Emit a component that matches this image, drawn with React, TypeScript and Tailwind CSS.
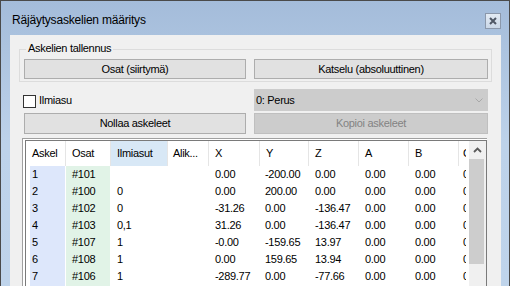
import React from "react";

const cols = [40, 45, 57, 41, 51, 49, 50, 50, 50];
const headers = ["Askel", "Osat", "Ilmiasut", "Alik...", "X", "Y", "Z", "A", "B"];
const rows: string[][] = [
  ["1", "#101", "", "", "0.00", "-200.00", "0.00", "0.00", "0.00"],
  ["2", "#100", "0", "", "0.00", "200.00", "0.00", "0.00", "0.00"],
  ["3", "#102", "0", "", "-31.26", "0.00", "-136.47", "0.00", "0.00"],
  ["4", "#103", "0,1", "", "31.26", "0.00", "-136.47", "0.00", "0.00"],
  ["5", "#107", "1", "", "-0.00", "-159.65", "13.97", "0.00", "0.00"],
  ["6", "#108", "1", "", "0.00", "159.65", "13.94", "0.00", "0.00"],
  ["7", "#106", "1", "", "-289.77", "0.00", "-77.66", "0.00", "0.00"],
  ["8", "#105", "1", "", "289.77", "0.00", "-77.66", "0.00", "0.00"],
];

function Btn({ w, h, label, disabled }: { w: string; h: string; label: string; disabled?: boolean }) {
  return (
    <div
      className={`${w} ${h} shrink-0 flex items-center justify-center border ${
        disabled ? "bg-[#cccccc] border-[#bfbfbf] text-[#838383]" : "bg-[#e1e1e1] border-[#adadad] text-black"
      }`}
    >
      {label}
    </div>
  );
}

export default function App() {
  return (
    <div
      className="w-[510px] h-[286px] overflow-hidden bg-white text-[11px] tracking-[-0.3px] leading-[13px] text-black"
      style={{ fontFamily: '"Liberation Sans", Arial, sans-serif' }}
    >
      <div className="h-[286px] border-l border-t border-r border-[#4a4a4a] bg-gradient-to-b from-[#a4bcda] via-[#bdd2ea] to-[#bfd4eb] flex flex-col">
        {/* Title bar */}
        <div className="h-[34px] shrink-0 flex items-center justify-between pl-[11px] pr-[8px]">
          <div className="text-[12px] tracking-[-0.2px] mt-[4px]">Räjäytysaskelien määritys</div>
          <div className="w-[16px] h-[16px] mt-[6px] border border-[#8b98ab] bg-gradient-to-b from-[#e3ebf4] to-[#cbd8e8] flex items-center justify-center">
            <svg width="10" height="10" viewBox="0 0 10 10">
              <path d="M2 2 L8 8 M8 2 L2 8" stroke="#4f5866" strokeWidth="2" />
            </svg>
          </div>
        </div>

        {/* Content */}
        <div className="flex-1 ml-[9px] mr-[8px] bg-[#f0f0f0] flex flex-col min-h-0">
          {/* Group box */}
          <div className="relative mt-[14px] ml-[9px] w-[473px] border border-[#dcdcdc] pt-[9px] pl-[4px] pr-[3px] pb-[2px]">
            <span className="absolute left-[6px] top-[-8px] px-[2px] bg-[#f0f0f0]">Askelien tallennus</span>
            <div className="flex gap-[8px]">
              <Btn w="w-[222px]" h="h-[20px]" label="Osat (siirtymä)" />
              <Btn w="w-[234px]" h="h-[20px]" label="Katselu (absoluuttinen)" />
            </div>
          </div>

          {/* Row 2 */}
          <div className="mt-[7px] pl-[13px] flex">
            <div className="w-[231px] flex items-start pt-[6px]">
              <div className="w-[13px] h-[13px] border border-[#333333] bg-white" />
              <span className="ml-[3px] mt-[-1px]">Ilmiasu</span>
            </div>
            <div className="w-[234px] h-[22px] bg-[#cccccc] flex items-center justify-between pl-[2px] pr-[5px]">
              <span>0: Perus</span>
              <svg width="8" height="5" viewBox="0 0 8 5">
                <path d="M0.5 0.5 L4 4 L7.5 0.5" stroke="#a8a8a8" strokeWidth="1" fill="none" />
              </svg>
            </div>
          </div>

          {/* Row 3 */}
          <div className="mt-[2px] pl-[14px] flex gap-[8px]">
            <Btn w="w-[222px]" h="h-[21px]" label="Nollaa askeleet" />
            <Btn w="w-[234px]" h="h-[21px]" label="Kopioi askeleet" disabled />
          </div>

          {/* Table */}
          <div className="mt-[4px] ml-[12px] w-[465px] flex-1 min-h-0 overflow-hidden border-l border-t border-[#a0a0a0] bg-white pl-[2px] pt-[1px]">
            <div className="h-full border-l border-t border-r border-[#7a7a7a] flex">
              <div className="w-[443px] flex flex-col">
                {/* header */}
                <div className="h-[25px] shrink-0 flex">
                  {headers.map((h, i) => (
                    <div
                      key={h}
                      style={{ width: cols[i] }}
                      className={`shrink-0 h-full flex items-center border-r border-[#e5e5e5] ${
                        i === 2 ? "bg-[#d8e8f6]" : "bg-white"
                      } ${i === 3 ? "pl-[5px]" : "pl-[6px]"}`}
                    >
                      {h}
                    </div>
                  ))}
                  <div className="w-[10px] shrink-0 h-full">
                    <div className="w-[7px] h-full overflow-hidden pl-[4px] flex items-center">C</div>
                  </div>
                </div>
                {/* rows */}
                {rows.map((r, ri) => (
                  <div key={ri} className="h-[17px] shrink-0 flex">
                    {r.map((c, ci) =>
                      ci === 0 ? (
                        <div key={ci} style={{ width: cols[ci] }} className="shrink-0 h-full pl-[4px] border-r border-white">
                          <div className="h-full bg-[#dde7fb] pl-[2px] flex items-center">{c}</div>
                        </div>
                      ) : (
                        <div
                          key={ci}
                          style={{ width: cols[ci] }}
                          className={`shrink-0 h-full flex items-center border-r border-white ${
                            ci === 1 ? "bg-[#e1f3e7]" : "bg-white"
                          } ${ci === 3 || ci === 5 ? "pl-[5px]" : "pl-[6px]"}`}
                        >
                          {c}
                        </div>
                      )
                    )}
                    <div className="w-[10px] shrink-0 h-full">
                      <div className="w-[7px] h-full overflow-hidden pl-[4px] flex items-center whitespace-nowrap">0.00</div>
                    </div>
                  </div>
                ))}
              </div>
              {/* scrollbar */}
              <div className="w-[17px] shrink-0 bg-[#f0f0f0] flex flex-col">
                <div className="h-[18px] shrink-0 flex items-center justify-center">
                  <svg width="9" height="6" viewBox="0 0 9 6">
                    <path d="M1 5 L4.5 1.5 L8 5" stroke="#5a5a5a" strokeWidth="1.8" fill="none" />
                  </svg>
                </div>
                <div className="w-[15px] h-[105px] bg-[#cdcdcd]" />
              </div>
            </div>
          </div>
        </div>
      </div>
    </div>
  );
}
